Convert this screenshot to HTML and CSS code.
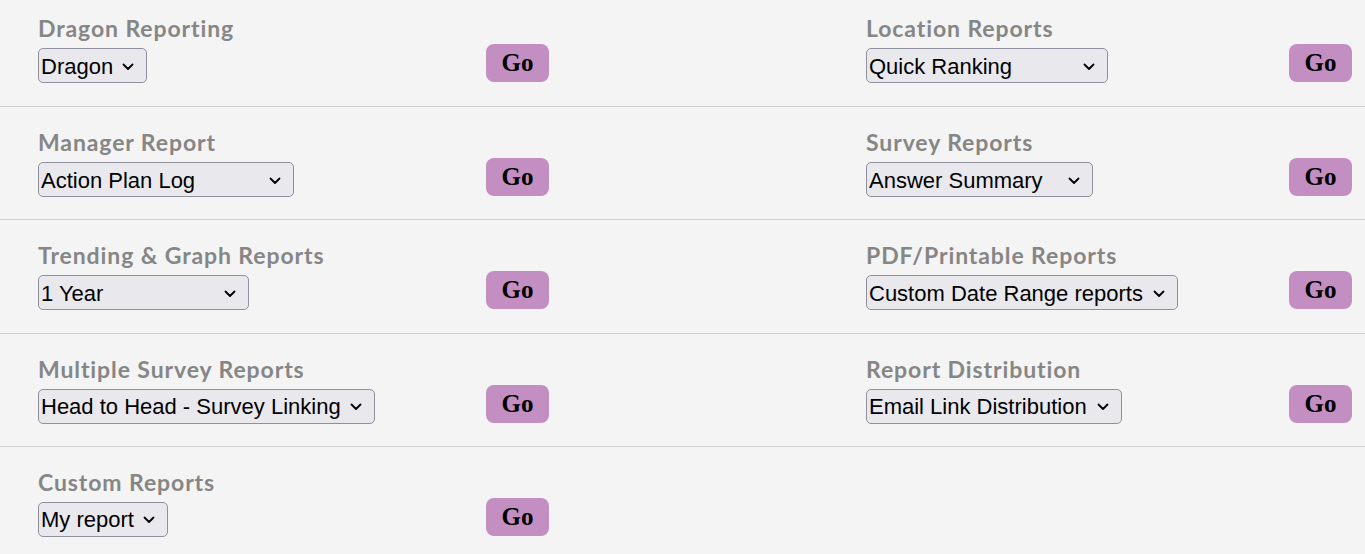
FILE: index.html
```html
<!DOCTYPE html>
<html>
<head>
<meta charset="utf-8">
<title>Reports</title>
<link rel="stylesheet" href="styles.css">
</head>
<body>
<div class="page">
  <div class="row row-first">
    <div class="field">
      <div class="label">Dragon Reporting</div>
      <div class="sel-wrap"><select class="sel w-dragon"><option>Dragon</option></select><svg class="chev" viewBox="0 0 12 8" width="12" height="8"><path d="M1.5 1.5 L6 6 L10.5 1.5"/></svg></div>
    </div>
    <div class="go-cell"><button class="go">Go</button></div>
    <div></div>
    <div class="field">
      <div class="label">Location Reports</div>
      <div class="sel-wrap"><select class="sel w-quick"><option>Quick Ranking</option></select><svg class="chev" viewBox="0 0 12 8" width="12" height="8"><path d="M1.5 1.5 L6 6 L10.5 1.5"/></svg></div>
    </div>
    <div class="go-cell"><button class="go">Go</button></div>
  </div>

  <div class="row">
    <div class="field">
      <div class="label">Manager Report</div>
      <div class="sel-wrap"><select class="sel w-action"><option>Action Plan Log</option></select><svg class="chev" viewBox="0 0 12 8" width="12" height="8"><path d="M1.5 1.5 L6 6 L10.5 1.5"/></svg></div>
    </div>
    <div class="go-cell"><button class="go">Go</button></div>
    <div></div>
    <div class="field">
      <div class="label">Survey Reports</div>
      <div class="sel-wrap"><select class="sel w-answer"><option>Answer Summary</option></select><svg class="chev" viewBox="0 0 12 8" width="12" height="8"><path d="M1.5 1.5 L6 6 L10.5 1.5"/></svg></div>
    </div>
    <div class="go-cell"><button class="go">Go</button></div>
  </div>

  <div class="row">
    <div class="field">
      <div class="label">Trending &amp; Graph Reports</div>
      <div class="sel-wrap"><select class="sel w-year"><option>1 Year</option></select><svg class="chev" viewBox="0 0 12 8" width="12" height="8"><path d="M1.5 1.5 L6 6 L10.5 1.5"/></svg></div>
    </div>
    <div class="go-cell"><button class="go">Go</button></div>
    <div></div>
    <div class="field">
      <div class="label">PDF/Printable Reports</div>
      <div class="sel-wrap"><select class="sel w-custom"><option>Custom Date Range reports</option></select><svg class="chev" viewBox="0 0 12 8" width="12" height="8"><path d="M1.5 1.5 L6 6 L10.5 1.5"/></svg></div>
    </div>
    <div class="go-cell"><button class="go">Go</button></div>
  </div>

  <div class="row">
    <div class="field">
      <div class="label">Multiple Survey Reports</div>
      <div class="sel-wrap"><select class="sel w-head"><option>Head to Head - Survey Linking</option></select><svg class="chev" viewBox="0 0 12 8" width="12" height="8"><path d="M1.5 1.5 L6 6 L10.5 1.5"/></svg></div>
    </div>
    <div class="go-cell"><button class="go">Go</button></div>
    <div></div>
    <div class="field">
      <div class="label">Report Distribution</div>
      <div class="sel-wrap"><select class="sel w-email"><option>Email Link Distribution</option></select><svg class="chev" viewBox="0 0 12 8" width="12" height="8"><path d="M1.5 1.5 L6 6 L10.5 1.5"/></svg></div>
    </div>
    <div class="go-cell"><button class="go">Go</button></div>
  </div>

  <div class="row row-last">
    <div class="field">
      <div class="label">Custom Reports</div>
      <div class="sel-wrap"><select class="sel w-my"><option>My report</option></select><svg class="chev" viewBox="0 0 12 8" width="12" height="8"><path d="M1.5 1.5 L6 6 L10.5 1.5"/></svg></div>
    </div>
    <div class="go-cell"><button class="go">Go</button></div>
  </div>
</div>
</body>
</html>
```

FILE: styles.css
```css
html, body {
  margin: 0;
  padding: 0;
  background: #f4f4f4;
}

.page {
  width: 1365px;
}

.row {
  display: grid;
  grid-template-columns: 448px 63px 317px 423px 63px;
  align-items: end;
  padding: 21px 0 22.33px 38px;
  border-bottom: 1px solid #cfcfcf;
}

.row-first {
  padding-top: 14px;
  padding-bottom: 23px;
}

.row-last {
  border-bottom: none;
}

.field {
  display: flex;
  flex-direction: column;
  align-items: flex-start;
}

.label {
  font-family: Lato, "Open Sans", sans-serif;
  font-weight: 700;
  font-size: 23px;
  line-height: 28px;
  letter-spacing: 0.9px;
  color: #868686;
  margin-bottom: 6px;
  white-space: nowrap;
}

.sel-wrap {
  position: relative;
  display: inline-flex;
}

.sel {
  -webkit-appearance: none;
  appearance: none;
  box-sizing: border-box;
  height: 35px;
  margin: 0;
  padding: 1px 0 0 2px;
  font-family: "Liberation Sans", Arial, sans-serif;
  font-size: 22px;
  color: #000;
  background: #e9e9ed;
  border: 1px solid #8f8f9d;
  border-radius: 5px;
}

.chev {
  position: absolute;
  right: 13px;
  top: 50%;
  margin-top: -3px;
  pointer-events: none;
}

.chev path {
  fill: none;
  stroke: #000;
  stroke-width: 1.8;
  stroke-linecap: round;
  stroke-linejoin: round;
}

.w-dragon { width: 109px; }
.w-quick { width: 242px; }
.w-action { width: 256px; }
.w-answer { width: 227px; }
.w-year { width: 211px; }
.w-custom { width: 312px; }
.w-head { width: 337px; }
.w-email { width: 256px; }
.w-my { width: 130px; }

.go-cell {
  display: flex;
  align-items: flex-end;
}

.go {
  width: 63px;
  height: 38px;
  margin: 0 0 1px 0;
  padding: 0;
  border: none;
  border-radius: 8px;
  background: #c38fc3;
  color: #000;
  font-family: "Liberation Serif", "Times New Roman", serif;
  font-weight: 700;
  font-size: 25px;
  line-height: 38px;
}
```
